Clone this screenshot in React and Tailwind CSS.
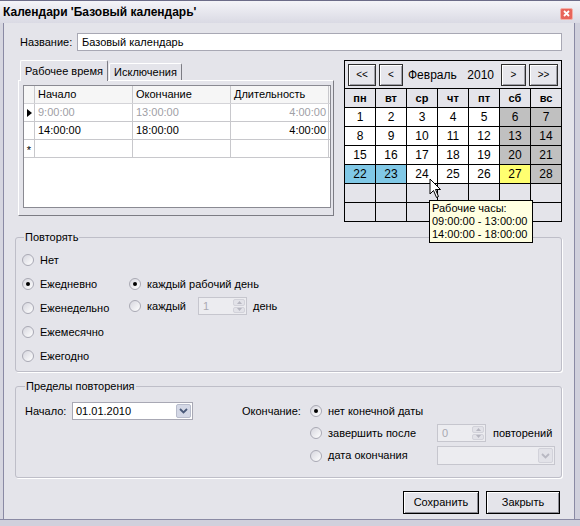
import React from "react";

const font = "font-['Liberation_Sans',Arial,sans-serif]";

function Radio({ checked }) {
  return (
    <span className="w-[12px] h-[12px] shrink-0 rounded-full border border-[#a9a9b4] bg-gradient-to-br from-[#d6d6de] to-white flex items-center justify-center">
      {checked && <span className="w-[4px] h-[4px] rounded-full bg-black" />}
    </span>
  );
}

function Chevron({ color = "#4a5a7a" }) {
  return (
    <svg width="9" height="6" viewBox="0 0 9 6">
      <path d="M1 1 L4.5 4.5 L8 1" fill="none" stroke={color} strokeWidth="1.8" />
    </svg>
  );
}

function Spin({ value, w }) {
  return (
    <div className={`${w} h-[18px] flex border border-[#c6c6ce] bg-[#ececf0] shrink-0`}>
      <span className="flex-1 pl-[4px] leading-[16px] text-[#a9a9b2]">{value}</span>
      <span className="w-[14px] flex flex-col gap-px p-px">
        <span className="flex-1 rounded-[2px] bg-[#e2e2e8] border border-[#d2d2da] flex items-center justify-center">
          <svg width="5" height="3" viewBox="0 0 5 3">
            <path d="M0 3 L2.5 0 L5 3 Z" fill="#b6b6c0" />
          </svg>
        </span>
        <span className="flex-1 rounded-[2px] bg-[#e2e2e8] border border-[#d2d2da] flex items-center justify-center">
          <svg width="5" height="3" viewBox="0 0 5 3">
            <path d="M0 0 L2.5 3 L5 0 Z" fill="#b6b6c0" />
          </svg>
        </span>
      </span>
    </div>
  );
}

function NavBtn({ children, w, extra = "" }) {
  return (
    <span
      className={`${w} ${extra} h-[22px] shrink-0 flex items-center justify-center border border-[#2e2e2e] bg-[#e6e6ec] shadow-[inset_1px_1px_0_#ffffff,inset_-1px_-1px_0_#a0a0a8] text-[10px]`}
    >
      {children}
    </span>
  );
}

const weeks = [
  [1, 2, 3, 4, 5, 6, 7],
  [8, 9, 10, 11, 12, 13, 14],
  [15, 16, 17, 18, 19, 20, 21],
  [22, 23, 24, 25, 26, 27, 28],
  [null, null, null, null, null, null, null],
  [null, null, null, null, null, null, null],
];

function dayBg(d, col) {
  if (d === null) return "bg-[#e4e4ea]";
  if (d === 22 || d === 23) return "bg-[#80c8e6]";
  if (d === 27) return "bg-[#ffff70]";
  if (col >= 5) return "bg-[#c0c0c0]";
  return "bg-white";
}

function Calendar() {
  return (
    <div className="relative w-[218px] shrink-0 bg-black p-px flex flex-col gap-px">
      <div className="h-[27px] bg-[#e4e4ea] flex items-center px-[3px] text-[12px]">
        <NavBtn w="w-[28px]">&lt;&lt;</NavBtn>
        <NavBtn w="w-[24px]" extra="ml-[3px]">&lt;</NavBtn>
        <div className="flex-1 flex justify-between pl-[5px] pr-[7px]">
          <span>Февраль</span>
          <span>2010</span>
        </div>
        <NavBtn w="w-[25px]">&gt;</NavBtn>
        <NavBtn w="w-[29px]" extra="ml-[3px]">&gt;&gt;</NavBtn>
      </div>
      <div className="grid grid-cols-7 gap-px text-[12px]">
        {["пн", "вт", "ср", "чт", "пт", "сб", "вс"].map((d) => (
          <div key={d} className="h-[18px] bg-[#e4e4ea] flex items-center justify-center font-bold text-[11px]">
            {d}
          </div>
        ))}
        {weeks.map((w, r) =>
          w.map((d, c) => (
            <div key={`${r}-${c}`} className={`h-[18px] flex items-center justify-center ${dayBg(d, c)}`}>
              {d}
            </div>
          ))
        )}
      </div>

      <svg className="absolute left-[85px] top-[118px] z-20" width="13" height="21" viewBox="0 0 13 21">
        <path d="M1 1 L1 16 L4.5 12.5 L7.5 19.5 L9.5 18.5 L6.5 11.5 L11.5 11.5 Z" fill="white" stroke="black" strokeWidth="1" strokeLinejoin="round" />
      </svg>
      <div className="absolute left-[85px] top-[140px] z-10 w-[104px] whitespace-nowrap bg-[#ffffe1] border border-black px-[2px] py-[1px] text-[11px] leading-[13px]">
        <div>Рабочие часы:</div>
        <div>09:00:00 - 13:00:00</div>
        <div>14:00:00 - 18:00:00</div>
      </div>
    </div>
  );
}

function GridRow({ mark, cells, grey }) {
  return (
    <div className={`h-[18px] flex border-b border-[#c8c8cc] ${grey ? "text-[#a0a0a6]" : "text-black"}`}>
      <span className="w-[11px] shrink-0 border-r border-[#c8c8cc] flex items-center justify-center">
        {mark === "arrow" && (
          <svg width="5" height="8" viewBox="0 0 5 8">
            <path d="M0 0 L5 4 L0 8 Z" fill="black" />
          </svg>
        )}
        {mark === "star" && <span className="text-black text-[11px] leading-none mt-[3px]">*</span>}
      </span>
      <span className="w-[98px] border-r border-[#c8c8cc] pl-[3px] leading-[17px]">{cells[0]}</span>
      <span className="w-[98px] border-r border-[#c8c8cc] pl-[3px] leading-[17px]">{cells[1]}</span>
      <span className="w-[98px] border-r border-[#c8c8cc] pr-[2px] text-right leading-[17px]">{cells[2]}</span>
    </div>
  );
}

function WorkTime() {
  return (
    <div className="ml-[3px] w-[316px] shrink-0 flex flex-col">
      <div className="h-[20px] flex items-end pl-[2px]">
        <span className="relative z-10 -mb-px h-[21px] w-[88px] flex items-center justify-center bg-[#e4e4ea] border-t border-l border-white border-r border-r-[#7c7c84] rounded-t-[2px]">
          Рабочее время
        </span>
        <span className="h-[17px] w-[73px] ml-px flex items-center justify-center bg-[#e4e4ea] border-t border-l border-white border-r border-r-[#7c7c84] rounded-t-[2px]">
          Исключения
        </span>
      </div>
      <div className="h-[136px] border border-white border-r-[#7c7c84] border-b-[#7c7c84] pt-[4px] pl-[4px] pr-[2px] bg-[#e4e4ea]">
        <div className="h-[123px] border border-[#8a8a92] bg-white flex flex-col">
          <div className="h-[18px] flex border-b border-[#d4d4d8] bg-[#f6f6f6]">
            <span className="w-[11px] shrink-0 border-r border-[#c8c8cc]" />
            <span className="w-[98px] border-r border-[#c8c8cc] pl-[3px] leading-[17px]">Начало</span>
            <span className="w-[98px] border-r border-[#c8c8cc] pl-[3px] leading-[17px]">Окончание</span>
            <span className="w-[98px] border-r border-[#c8c8cc] pl-[3px] leading-[17px]">Длительность</span>
          </div>
          <GridRow mark="arrow" grey cells={["9:00:00", "13:00:00", "4:00:00"]} />
          <GridRow cells={["14:00:00", "18:00:00", "4:00:00"]} />
          <GridRow mark="star" cells={["", "", ""]} />
        </div>
      </div>
    </div>
  );
}

function Group({ title, className = "", children }) {
  return (
    <fieldset className={`border border-[#bebec8] rounded-[3px] shadow-[1px_1px_0_#ffffff] ${className}`}>
      <legend className="px-[1px] leading-[14px]">{title}</legend>
      {children}
    </fieldset>
  );
}

function Button({ children, w }) {
  return (
    <button className={`${w} h-[23px] border border-black bg-[#e4e4ea] shadow-[inset_1px_1px_0_#ffffff,inset_-1px_-1px_0_#8c8c94] text-[11px]`}>
      {children}
    </button>
  );
}

export default function App() {
  return (
    <div className={`w-[580px] h-[526px] flex flex-col bg-[#c8c8d6] text-[11px] text-black ${font}`}>
      <div className="h-[23px] shrink-0 flex items-center pl-[3px] pr-[7px] border-t border-[#6c6c88] bg-gradient-to-b from-[#f4f4f8] to-[#dadae4]">
        <span className="font-bold text-[12px]">Календари 'Базовый календарь'</span>
        <span className="ml-auto mt-[3px] w-[13px] h-[12px] rounded-[2px] bg-[#e8645a] border border-[#f4b0a8] flex items-center justify-center">
          <svg width="7" height="7" viewBox="0 0 7 7">
            <path d="M1 1 L6 6 M6 1 L1 6" stroke="white" strokeWidth="1.8" />
          </svg>
        </span>
      </div>

      <div className="flex flex-1 min-h-0">
        <div className="w-[4px] shrink-0 bg-[#d6d6e0] border-r border-[#8a8aa4]" />
        <div className="flex-1 bg-[#e4e4ea] pt-[10px] pl-[11px] pr-[12px] flex flex-col">
          <div className="h-[18px] flex items-center">
            <span className="ml-[5px] w-[57px] shrink-0">Название:</span>
            <div className="flex-1 h-[18px] border border-[#a8a8b4] bg-white pl-[4px] leading-[16px]">
              Базовый календарь
            </div>
          </div>

          <div className="mt-[9px] flex items-start gap-[10px]">
            <WorkTime />
            <Calendar />
          </div>

          <Group title="Повторять" className="mt-[8px] pb-[3px] [&>legend]:ml-[8px]">
            <div className="flex pt-[4px] pl-[6px]">
              <div className="w-[107px] shrink-0 flex flex-col">
                {["Нет", "Ежедневно", "Еженедельно", "Ежемесячно", "Ежегодно"].map((t) => (
                  <div key={t} className="h-[24px] flex items-center gap-[6px]">
                    <Radio checked={t === "Ежедневно"} />
                    <span>{t}</span>
                  </div>
                ))}
              </div>
              <div className="flex flex-col pt-[24px]">
                <div className="h-[24px] flex items-center gap-[6px]">
                  <Radio checked />
                  <span>каждый рабочий день</span>
                </div>
                <div className="h-[20px] flex items-center gap-[6px]">
                  <Radio />
                  <span className="w-[45px]">каждый</span>
                  <Spin value="1" w="w-[49px]" />
                  <span>день</span>
                </div>
              </div>
            </div>
          </Group>

          <Group title="Пределы повторения" className="mt-[7px] pb-[10px] [&>legend]:ml-[9px]">
            <div className="flex items-start pt-[7px] pl-[9px]">
              <span className="w-[47px] h-[22px] shrink-0 flex items-center">Начало:</span>
              <div className="mt-[2px] w-[121px] h-[18px] shrink-0 flex border border-[#a8a8b4] bg-white">
                <span className="flex-1 pl-[3px] leading-[16px]">01.01.2010</span>
                <span className="w-[15px] m-px rounded-[2px] bg-[#d4d8e6] border border-[#b8bccc] flex items-center justify-center">
                  <Chevron />
                </span>
              </div>
              <span className="ml-[49px] w-[68px] h-[22px] shrink-0 flex items-center">Окончание:</span>
              <div className="flex flex-col">
                <div className="h-[22px] flex items-center gap-[6px]">
                  <Radio checked />
                  <span>нет конечной даты</span>
                </div>
                <div className="h-[22px] flex items-center gap-[6px]">
                  <Radio />
                  <span className="w-[103px]">завершить после</span>
                  <Spin value="0" w="w-[49px]" />
                  <span className="ml-px">повторений</span>
                </div>
                <div className="h-[23px] flex items-center gap-[6px]">
                  <Radio />
                  <span className="w-[103px]">дата окончания</span>
                  <div className="w-[118px] h-[19px] flex border border-[#c6c6ce] bg-[#ececf0]">
                    <span className="flex-1" />
                    <span className="w-[15px] m-px rounded-[2px] bg-[#e2e2e8] border border-[#d2d2da] flex items-center justify-center">
                      <Chevron color="#b8b8c2" />
                    </span>
                  </div>
                </div>
              </div>
            </div>
          </Group>

          <div className="mt-[13px] flex justify-end gap-[7px] pr-[2px]">
            <Button w="w-[76px]">Сохранить</Button>
            <Button w="w-[74px]">Закрыть</Button>
          </div>
        </div>
        <div className="w-[6px] shrink-0 bg-[#d0d0dc] border-l border-[#8a8aa4]" />
      </div>
      <div className="h-[7px] shrink-0 bg-[#d0d0dc] border-t border-[#8a8aa4]" />
    </div>
  );
}
